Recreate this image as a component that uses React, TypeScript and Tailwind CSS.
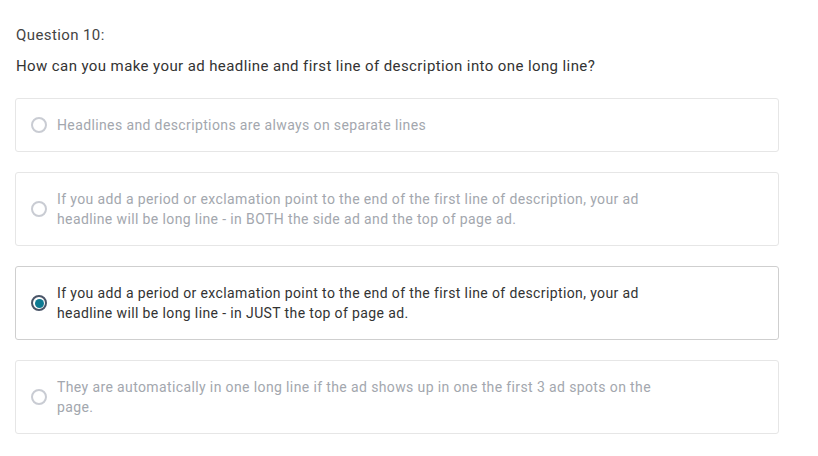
import React from "react";

const options = [
  { text: "Headlines and descriptions are always on separate lines", selected: false },
  {
    text: "If you add a period or exclamation point to the end of the first line of description, your ad headline will be long line - in BOTH the side ad and the top of page ad.",
    selected: false,
  },
  {
    text: "If you add a period or exclamation point to the end of the first line of description, your ad headline will be long line - in JUST the top of page ad.",
    selected: true,
  },
  {
    text: "They are automatically in one long line if the ad shows up in one the first 3 ad spots on the page.",
    selected: false,
  },
];

export default function App() {
  return (
    <div
      className="w-[818px] h-[456px] bg-white pl-[15px] pt-[25px]"
      style={{ fontFamily: "Roboto, 'Liberation Sans', sans-serif" }}
    >
      <div className="text-[15px] leading-[20px] tracking-[0.4px] text-[#444] pl-[1px]">Question 10:</div>
      <div className="mt-[11px] text-[15px] leading-[20px] tracking-[0.4px] text-[#333] pl-[1px]">
        How can you make your ad headline and first line of description into one long line?
      </div>
      <div className="mt-[22px] flex flex-col gap-[20px] w-[764px]">
        {options.map((o, i) => (
          <div
            key={i}
            className={`flex items-center gap-[10px] rounded-[3px] border bg-white py-[16px] pl-[15px] pr-[100px] ${
              o.selected ? "border-[#cfcfcf]" : "border-[#e6e6e6]"
            }`}
          >
            {o.selected ? (
              <div className="w-[16px] h-[16px] shrink-0 rounded-full border-2 border-[#4a5568] flex items-center justify-center">
                <div className="w-[9px] h-[9px] rounded-full bg-[#0e7a92]" />
              </div>
            ) : (
              <div className="w-[16px] h-[16px] shrink-0 rounded-full border-2 border-[#c9ccd3]" />
            )}
            <div
              className={`text-[14px] leading-[20px] tracking-[0.38px] ${
                o.selected ? "text-[#333]" : "text-[#a3a7ae]"
              }`}
            >
              {o.text}
            </div>
          </div>
        ))}
      </div>
    </div>
  );
}
